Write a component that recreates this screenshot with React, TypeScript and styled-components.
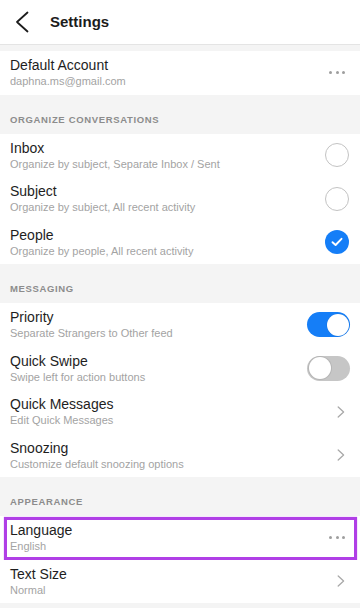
import React from 'react';
import styled, { createGlobalStyle } from 'styled-components';

const GlobalStyle = createGlobalStyle`
  html, body { margin: 0; padding: 0; background: #f4f4f4; }
  body { font-family: "Liberation Sans", "Helvetica Neue", Arial, sans-serif; }
  * { box-sizing: border-box; }
`;

const Page = styled.div`
  width: 360px;
  min-height: 608px;
  background: #f4f4f4;
  display: flex;
  flex-direction: column;
`;

const Header = styled.header`
  height: 45px;
  background: #fff;
  border-bottom: 1px solid #e4e4e4;
  display: flex;
  align-items: center;
  padding-left: 14px;
`;

const BackButton = styled.button`
  border: 0;
  background: none;
  padding: 0;
  width: 16px;
  height: 22px;
  display: flex;
  align-items: center;
  justify-content: center;
  cursor: pointer;
`;

const HeaderTitle = styled.h1`
  margin: 0 0 0 20px;
  font-size: 15px;
  font-weight: 700;
  color: #1c1c1c;
  line-height: 18px;
`;

const Spacer = styled.div`
  height: 6px;
`;

const SectionHeader = styled.div`
  height: 39px;
  display: flex;
  align-items: flex-end;
  padding: 0 10px 9px;
  font-size: 9.5px;
  line-height: 11px;
  font-weight: 700;
  letter-spacing: 0.65px;
  color: #8c8c8c;
  text-transform: uppercase;
`;

const Row = styled.div<{ $highlight?: boolean }>`
  position: relative;
  height: 43.5px;
  background: #fff;
  display: flex;
  align-items: center;
  justify-content: space-between;
  padding: 0 10px;

  ${(p) =>
    p.$highlight &&
    `
    &::after {
      content: '';
      position: absolute;
      left: 4px;
      right: 3px;
      top: 1px;
      bottom: 0;
      border: 3px solid #b03fe6;
      box-shadow: 0 0 1px #c77af0;
      pointer-events: none;
    }
  `}
`;

const TextBlock = styled.div`
  display: flex;
  flex-direction: column;
  min-width: 0;
`;

const Title = styled.div`
  font-size: 14px;
  line-height: 17px;
  color: #1e1e1e;
`;

const Subtitle = styled.div`
  font-size: 11px;
  line-height: 14px;
  color: #a3a3a3;
  white-space: nowrap;
`;

const Dots = styled.div`
  display: flex;
  gap: 3.5px;
  margin-right: 5px;
`;

const Dot = styled.span`
  width: 3px;
  height: 3px;
  border-radius: 50%;
  background: #9e9e9e;
`;

const Radio = styled.div<{ $checked?: boolean }>`
  width: 24px;
  height: 24px;
  border-radius: 50%;
  margin-right: 1px;
  display: flex;
  align-items: center;
  justify-content: center;
  border: ${(p) => (p.$checked ? 'none' : '1.5px solid #c3c3c3')};
  background: ${(p) => (p.$checked ? '#157ef7' : '#fff')};
`;

const Toggle = styled.div<{ $on?: boolean }>`
  width: 43px;
  height: 25px;
  border-radius: 13px;
  padding: 1.5px;
  display: flex;
  justify-content: ${(p) => (p.$on ? 'flex-end' : 'flex-start')};
  background: ${(p) => (p.$on ? '#157ef7' : '#c6c6c6')};
`;

const Knob = styled.div<{ $on?: boolean }>`
  width: 22px;
  height: 22px;
  border-radius: 50%;
  background: #fff;
  box-shadow: ${(p) => (p.$on ? '0 0 0 0.5px rgba(0,0,0,0.08)' : '0 0 0 1px #b5b5b5')};
`;

const ChevronWrap = styled.div`
  width: 8px;
  height: 12px;
  margin-right: 5px;
  display: flex;
`;

const BottomFill = styled.div`
  flex: 1;
`;

const MoreDots = () => (
  <Dots>
    <Dot />
    <Dot />
    <Dot />
  </Dots>
);

const Chevron = () => (
  <ChevronWrap>
    <svg width="8" height="12" viewBox="0 0 8 12">
      <polyline points="1.2,1 6.6,6 1.2,11" fill="none" stroke="#a9a9a9" strokeWidth="1.3" strokeLinecap="round" strokeLinejoin="round" />
    </svg>
  </ChevronWrap>
);

const RadioMark = ({ checked }: { checked?: boolean }) => (
  <Radio $checked={checked}>
    {checked && (
      <svg width="12" height="10" viewBox="0 0 12 10">
        <polyline points="1.5,5.2 4.6,8 10.5,1.8" fill="none" stroke="#fff" strokeWidth="1.9" strokeLinecap="round" strokeLinejoin="round" />
      </svg>
    )}
  </Radio>
);

const Switch = ({ on }: { on?: boolean }) => (
  <Toggle $on={on}>
    <Knob $on={on} />
  </Toggle>
);

type Item = {
  title: string;
  sub: string;
  accessory: React.ReactNode;
  highlight?: boolean;
};

const SettingRow = ({ title, sub, accessory, highlight }: Item) => (
  <Row $highlight={highlight}>
    <TextBlock>
      <Title>{title}</Title>
      <Subtitle>{sub}</Subtitle>
    </TextBlock>
    {accessory}
  </Row>
);

const sections: { header?: string; items: Item[] }[] = [
  {
    items: [{ title: 'Default Account', sub: 'daphna.ms@gmail.com', accessory: <MoreDots /> }],
  },
  {
    header: 'Organize Conversations',
    items: [
      { title: 'Inbox', sub: 'Organize by subject, Separate Inbox / Sent', accessory: <RadioMark /> },
      { title: 'Subject', sub: 'Organize by subject, All recent activity', accessory: <RadioMark /> },
      { title: 'People', sub: 'Organize by people, All recent activity', accessory: <RadioMark checked /> },
    ],
  },
  {
    header: 'Messaging',
    items: [
      { title: 'Priority', sub: 'Separate Strangers to Other feed', accessory: <Switch on /> },
      { title: 'Quick Swipe', sub: 'Swipe left for action buttons', accessory: <Switch /> },
      { title: 'Quick Messages', sub: 'Edit Quick Messages', accessory: <Chevron /> },
      { title: 'Snoozing', sub: 'Customize default snoozing options', accessory: <Chevron /> },
    ],
  },
  {
    header: 'Appearance',
    items: [
      { title: 'Language', sub: 'English', accessory: <MoreDots />, highlight: true },
      { title: 'Text Size', sub: 'Normal', accessory: <Chevron /> },
    ],
  },
];

export default function App() {
  return (
    <>
      <GlobalStyle />
      <Page>
        <Header>
          <BackButton aria-label="Back">
            <svg width="14" height="22" viewBox="0 0 14 22">
              <polyline points="12.5,1.5 2,11 12.5,20.5" fill="none" stroke="#1c1c1c" strokeWidth="1.8" strokeLinecap="round" strokeLinejoin="round" />
            </svg>
          </BackButton>
          <HeaderTitle>Settings</HeaderTitle>
        </Header>
        <Spacer />
        {sections.map((s, i) => (
          <React.Fragment key={i}>
            {s.header && <SectionHeader>{s.header}</SectionHeader>}
            {s.items.map((it) => (
              <SettingRow key={it.title} {...it} />
            ))}
          </React.Fragment>
        ))}
        <BottomFill />
      </Page>
    </>
  );
}
